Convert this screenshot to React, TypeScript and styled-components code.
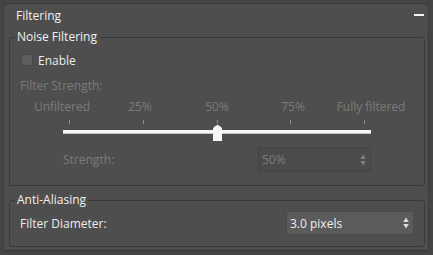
import React, { FunctionComponent } from 'react';
import styled, { createGlobalStyle } from 'styled-components';

const GlobalStyle = createGlobalStyle`
  html, body {
    margin: 0;
    padding: 0;
    background: #444444;
  }
  body {
    font-family: 'Open Sans', 'Noto Sans', sans-serif;
    font-size: 12px;
    color: #ececec;
  }
`;

const sliderStops = [
  { label: 'Unfiltered', shift: -7 },
  { label: '25%', shift: -3 },
  { label: '50%', shift: 0 },
  { label: '75%', shift: 2 },
  { label: 'Fully filtered', shift: 6 },
];

const Rollout = styled.div`
  margin: 3px 4px 4px 3px;
  width: 426px;
  height: 248px;
  box-sizing: border-box;
  border: 1px solid #3a3a3a;
  border-radius: 3px;
  background: #4e4e4e;
  display: flex;
  flex-direction: column;
`;

const Header = styled.div`
  height: 23px;
  display: flex;
  align-items: center;
  justify-content: space-between;
  padding: 0 4px 0 12px;
  color: #f2f2f2;
`;

const Collapse = styled.span`
  width: 10px;
  height: 2px;
  background: #f4f4f4;
  margin-top: -1px;
`;

const Body = styled.div`
  padding: 0 3px 0 5px;
  display: flex;
  flex-direction: column;
`;

type GroupProps = {
  $top: number;
  $padTop: number;
  $padBottom: number;
};

const Group = styled.section<GroupProps>`
  position: relative;
  margin-top: ${({ $top }) => $top}px;
  padding: ${({ $padTop }) => $padTop}px 0 ${({ $padBottom }) => $padBottom}px 10px;
  border: 1px solid #393939;
  border-radius: 3px;
  display: flex;
  flex-direction: column;
`;

const GroupTitle = styled.span`
  position: absolute;
  top: -9px;
  left: 5px;
  padding: 0 2px;
  line-height: 16px;
  background: #4e4e4e;
  color: #f0f0f0;
`;

type RowProps = {
  $top?: number;
  $height?: number;
};

const Row = styled.div<RowProps>`
  display: flex;
  align-items: center;
  margin-top: ${({ $top }) => $top || 0}px;
  height: ${({ $height }) => $height || 16}px;
`;

const CheckBox = styled.span`
  width: 12px;
  height: 12px;
  box-sizing: border-box;
  margin: 0 5px 0 1px;
  background: #5d5d5d;
  border: 1px solid #474747;
`;

type TextProps = {
  $dim?: boolean;
  $indent?: number;
};

const Text = styled.span<TextProps>`
  color: ${({ $dim }) => ($dim ? '#7b7b7b' : '#ececec')};
  padding-left: ${({ $indent }) => $indent || 0}px;
  white-space: nowrap;
`;

const SliderArea = styled.div`
  margin-left: 43px;
  width: 308px;
  display: flex;
  flex-direction: column;
`;

const StopLabels = styled.div`
  margin: 6px 0 0 -31px;
  width: 370px;
  height: 16px;
  display: flex;
`;

const StopLabel = styled.span<{ $shift: number }>`
  width: 74px;
  text-align: center;
  white-space: nowrap;
  color: #7b7b7b;
  line-height: 16px;
  transform: translateX(${({ $shift }) => $shift}px);
`;

const Track = styled.div`
  position: relative;
  height: 26px;
`;

const Ticks = styled.div`
  display: flex;
  justify-content: space-between;
  padding: 5px 6px 0 6px;
`;

const Tick = styled.span`
  width: 1px;
  height: 4px;
  background: #8c8c8c;
`;

const Rail = styled.div`
  margin-top: 6px;
  height: 4px;
  box-sizing: border-box;
  background: #f6f6f6;
  border-bottom: 1px solid #c4c4c4;
`;

const Thumb = styled.svg`
  position: absolute;
  top: 10px;
  width: 9px;
  height: 16px;
`;

type FieldProps = {
  $width: number;
  $right: number;
  $height: number;
  $active?: boolean;
};

const Field = styled.div<FieldProps>`
  margin-left: auto;
  margin-right: ${({ $right }) => $right}px;
  width: ${({ $width }) => $width}px;
  height: ${({ $height }) => $height}px;
  box-sizing: border-box;
  border: 1px solid ${({ $active }) => ($active ? '#4a4a4a' : '#444444')};
  background: ${({ $active }) => ($active ? '#5b5b5b' : '#4b4b4b')};
  display: flex;
  align-items: center;
  justify-content: space-between;
  padding: 0 4px 0 3px;
  color: ${({ $active }) => ($active ? '#f0f0f0' : '#7b7b7b')};
`;

const Arrows: FunctionComponent<{ color: string }> = ({ color }) => (
  <svg width='6' height='12' viewBox='0 0 6 12'>
    <path d='M3 0.5 L5.8 5 L0.2 5 Z' fill={color} />
    <path d='M0.2 7 L5.8 7 L3 11.5 Z' fill={color} />
  </svg>
);

const thumbPos = 50;

const App: FunctionComponent = () => {
  return (
    <>
      <GlobalStyle />
      <Rollout>
        <Header>
          <span>Filtering</span>
          <Collapse />
        </Header>
        <Body>
          <Group $top={10} $padTop={14} $padBottom={13}>
            <GroupTitle>Noise Filtering</GroupTitle>
            <Row>
              <CheckBox />
              <Text>Enable</Text>
            </Row>
            <Row $top={9}>
              <Text $dim>Filter Strength:</Text>
            </Row>
            <SliderArea>
              <StopLabels>
                {sliderStops.map((stop, i) => (
                  <StopLabel $shift={stop.shift} key={i}>
                    {stop.label}
                  </StopLabel>
                ))}
              </StopLabels>
              <Track>
                <Ticks>
                  {sliderStops.map((_, i) => (
                    <Tick key={i} />
                  ))}
                </Ticks>
                <Rail />
                <Thumb
                  viewBox='0 0 9 16'
                  style={{ left: `calc(6px + ${thumbPos / 100} * (100% - 12px) - 4px)` }}
                >
                  <path d='M0 4 Q0 3 1 2 L3.5 0.3 Q4.5 -0.3 5.5 0.3 L8 2 Q9 3 9 4 L9 16 L0 16 Z' fill='#f6f6f6' />
                </Thumb>
              </Track>
            </SliderArea>
            <Row $top={6} $height={25}>
              <Text $dim $indent={43}>
                Strength:
              </Text>
              <Field $width={113} $right={53} $height={25}>
                <span>50%</span>
                <Arrows color='#7d7d7d' />
              </Field>
            </Row>
          </Group>
          <Group $top={14} $padTop={10} $padBottom={11}>
            <GroupTitle>Anti-Aliasing</GroupTitle>
            <Row $height={24}>
              <Text>Filter Diameter:</Text>
              <Field $width={128} $right={10} $height={24} $active>
                <span>3.0 pixels</span>
                <Arrows color='#dcdcdc' />
              </Field>
            </Row>
          </Group>
        </Body>
      </Rollout>
    </>
  );
};

export default App;
